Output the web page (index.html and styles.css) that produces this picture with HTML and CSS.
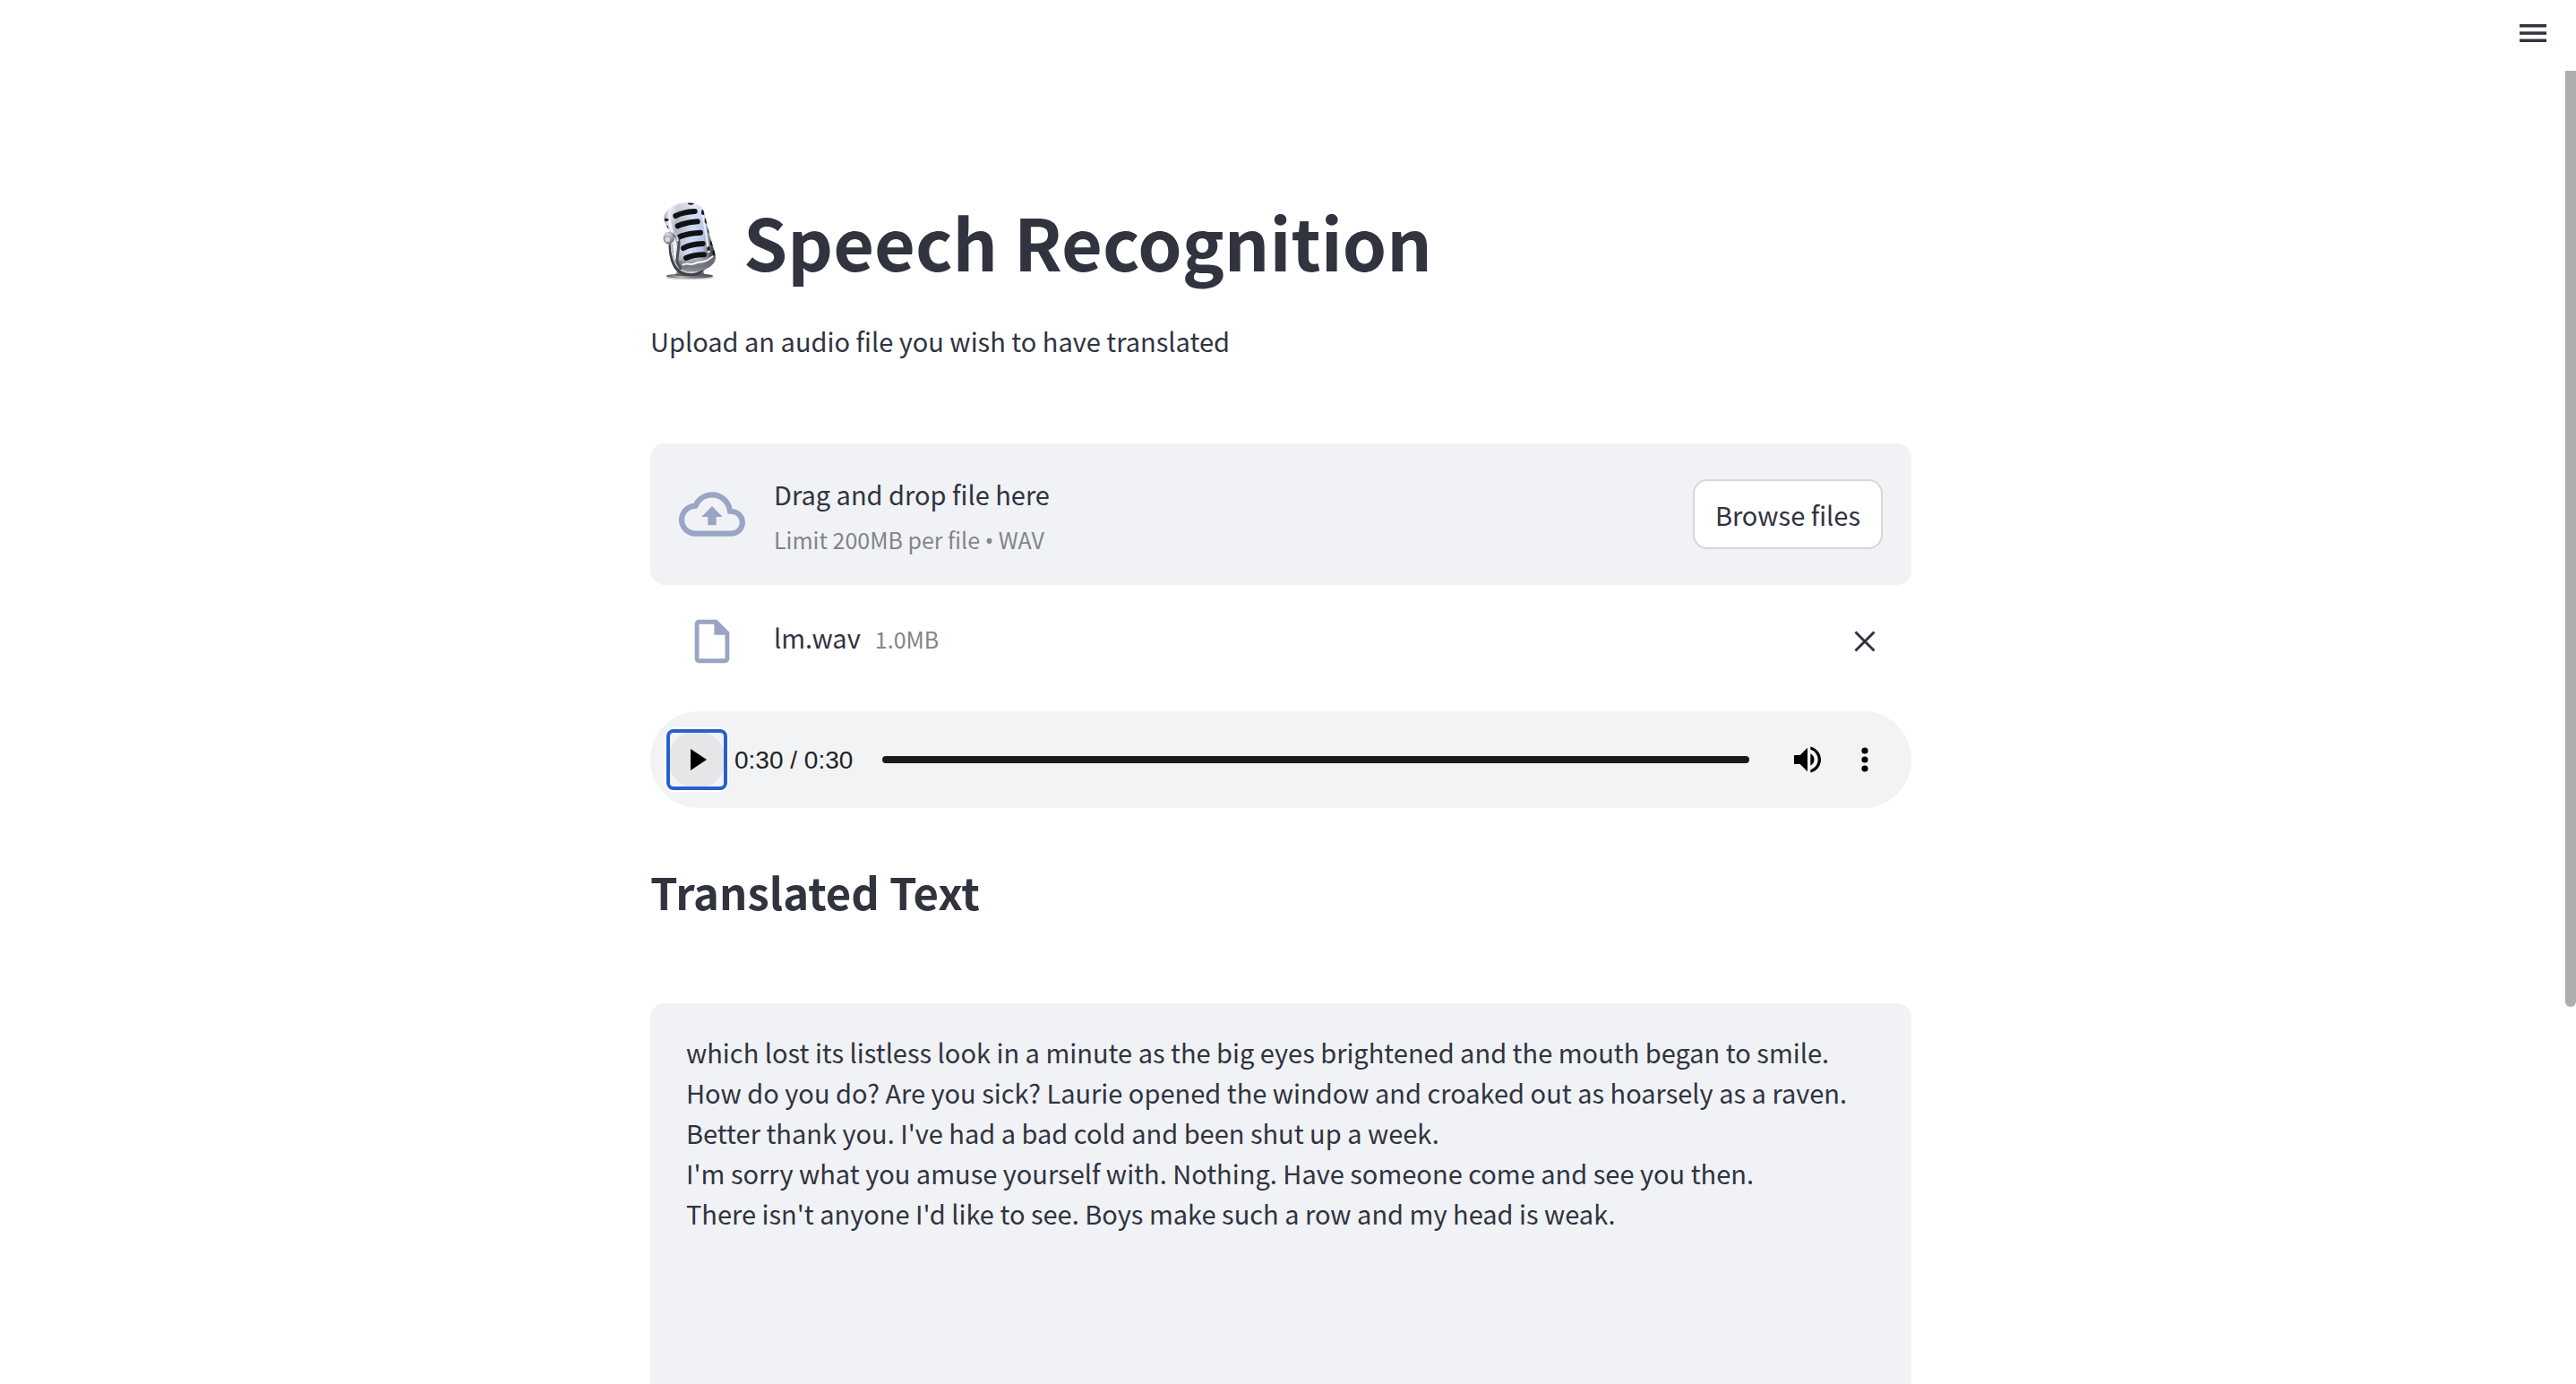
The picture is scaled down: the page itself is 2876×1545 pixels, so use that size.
FILE: index.html
```html
<!DOCTYPE html>
<html lang="en">
<head>
<meta charset="utf-8">
<title>Speech Recognition</title>
<link rel="stylesheet" href="styles.css">
</head>
<body>
<div class="app">
  <header class="toolbar">
    <button class="icon-button menu-button" type="button" aria-label="Main menu">
      <svg width="30" height="20" viewBox="0 0 30 20" fill="currentColor"><path d="M0 0h30v3.4H0zM0 8.3h30v3.4H0zM0 16.6h30V20H0z"/></svg>
    </button>
  </header>

  <div class="viewport">
    <main class="content">
      <h1 class="title">
        <svg class="mic" viewBox="30 36 264 288" aria-hidden="true">
          <defs>
            <linearGradient id="body" x1="0" y1="0" x2="1" y2="0.15">
              <stop offset="0" stop-color="#6d6f74"/><stop offset="0.12" stop-color="#e6eaf0"/>
              <stop offset="0.28" stop-color="#aeb4bf"/><stop offset="0.6" stop-color="#cfdcf6"/>
              <stop offset="0.82" stop-color="#b4c4e6"/><stop offset="0.93" stop-color="#85888f"/>
              <stop offset="1" stop-color="#4c4d51"/>
            </linearGradient>
            <linearGradient id="shade" x1="0" y1="0" x2="0" y2="1">
              <stop offset="0" stop-color="#fff" stop-opacity="0.5"/><stop offset="0.3" stop-color="#fff" stop-opacity="0"/>
              <stop offset="0.72" stop-color="#777" stop-opacity="0"/><stop offset="0.9" stop-color="#66686c" stop-opacity="0.75"/>
              <stop offset="1" stop-color="#d5d6d8" stop-opacity="0.6"/>
            </linearGradient>
            <linearGradient id="base" x1="0" y1="0" x2="1" y2="0">
              <stop offset="0" stop-color="#55575b"/><stop offset="0.3" stop-color="#b5b7bb"/>
              <stop offset="0.6" stop-color="#77797d"/><stop offset="1" stop-color="#4b4c50"/>
            </linearGradient>
            <radialGradient id="knob" cx="0.4" cy="0.35" r="0.7">
              <stop offset="0" stop-color="#f4f6f9"/><stop offset="0.55" stop-color="#a9adb4"/><stop offset="1" stop-color="#5d5f64"/>
            </radialGradient>
            <clipPath id="shell"><path d="M76 104C78 80 100 60 132 54C166 47 201 57 207 75C218 110 225 150 236 185C242 205 250 224 248 240C244 264 212 281 180 282C146 282 124 268 119 242L106 172C102 148 76 128 76 104Z"/></clipPath>
          </defs>
          <ellipse cx="162" cy="303" rx="81" ry="6" fill="#c4c5c8"/>
          <path d="M124 270L116 293H212L203 270Z" fill="#77797e"/>
          <ellipse cx="162" cy="297" rx="79" ry="8" fill="url(#base)"/>
          <ellipse cx="164" cy="293" rx="53" ry="5" fill="#55575b"/>
          <path d="M99 190C97 225 107 267 132 283C163 298 202 292 211 263" fill="none" stroke="#3f4146" stroke-width="14"/>
          <path d="M101 190C101 225 111 262 135 278C163 293 199 286 208 260" fill="none" stroke="#c5c8ce" stroke-width="6"/>
          <path d="M76 104C78 80 100 60 132 54C166 47 201 57 207 75C218 110 225 150 236 185C242 205 250 224 248 240C244 264 212 281 180 282C146 282 124 268 119 242L106 172C102 148 76 128 76 104Z" fill="url(#body)"/>
          <g clip-path="url(#shell)">
            <path d="M70 48H255V290H70Z" fill="url(#shade)"/>
            <path d="M119 240C140 258 164 246 180 257C202 260 220 240 248 221V286H124Z" fill="#73757b" opacity="0.7"/>
            <path d="M137 260C162 250 165 267 190 251C216 252 228 240 240 231" fill="none" stroke="#f3f5fa" stroke-width="6"/>
            <path d="M92 104L122 228" stroke="#eff3fb" stroke-width="8"/>
            <path d="M204 83L227 219" stroke="#e7efff" stroke-width="7"/>
            <g fill="none" stroke="#111214" stroke-width="18" stroke-linecap="round">
              <path d="M115 96C132 87 153 82 179 81"/>
              <path d="M122 130C142 121 165 116 188 115"/>
              <path d="M129 166C148 157 173 153 198 152"/>
              <path d="M141 204C159 194 183 190 206 189"/>
              <path d="M150 237C168 229 190 226 210 226"/>
            </g>
            <g fill="#17181b">
              <ellipse cx="166" cy="55" rx="10" ry="4"/>
              <ellipse cx="207" cy="84" rx="6" ry="9"/><ellipse cx="218" cy="112" rx="6" ry="10"/>
              <ellipse cx="228" cy="144" rx="6" ry="9"/><ellipse cx="237" cy="187" rx="6" ry="9"/>
              <ellipse cx="225" cy="206" rx="5" ry="7"/><ellipse cx="244" cy="220" rx="6" ry="9"/>
              <ellipse cx="84" cy="109" rx="8" ry="5"/><ellipse cx="85" cy="137" rx="6" ry="9"/>
            </g>
          </g>
          <path d="M94 153C113 156 126 169 126 188L119 249L133 275" fill="none" stroke="#4d4f54" stroke-width="9"/>
          <path d="M94 150C111 151 122 163 123 181" fill="none" stroke="#d9dde4" stroke-width="5"/>
          <ellipse cx="92" cy="170" rx="19" ry="21" fill="url(#knob)"/>
          <circle cx="88" cy="174" r="11" fill="#d5d9e0" stroke="#7f838b" stroke-width="3"/>
        </svg>
        <span>Speech Recognition</span>
      </h1>
      <p class="intro">Upload an audio file you wish to have translated</p>

      <section class="dropzone" aria-label="File upload">
        <svg class="cloud" viewBox="0 0 24 24" fill="currentColor" aria-hidden="true"><path d="M19.35 10.04A7.49 7.49 0 0 0 12 4C9.11 4 6.6 5.64 5.35 8.04A5.994 5.994 0 0 0 0 14c0 3.31 2.69 6 6 6h13c2.76 0 5-2.24 5-5 0-2.64-2.05-4.78-4.65-4.96zM19 18H6c-2.21 0-4-1.79-4-4 0-2.05 1.53-3.76 3.56-3.97l1.07-.11.5-.95A5.469 5.469 0 0 1 12 6c2.62 0 4.88 1.86 5.39 4.43l.3 1.5 1.53.11A2.98 2.98 0 0 1 22 15c0 1.65-1.35 3-3 3zM8.2 13h2.3v3h3v-3h2.3L12 9.1z"/></svg>
        <div class="dropzone-text">
          <span class="label">Drag and drop file here</span>
          <small class="hint">Limit 200MB per file <span class="bullet">•</span> WAV</small>
        </div>
        <button class="browse" type="button">Browse files</button>
      </section>

      <div class="file-row">
        <svg class="file-icon" viewBox="0 0 24 24" fill="currentColor" aria-hidden="true"><path fill-rule="evenodd" d="M6 2h8.2L20 7.8V20a2 2 0 0 1-2 2H6a2 2 0 0 1-2-2V4c0-1.100.9-2 2-2zM6 4v16h12V9h-5V4z"/></svg>
        <div class="file-name"><span class="label">lm.wav</span><small class="hint">1.0MB</small></div>
        <button class="icon-button remove" type="button" aria-label="Remove file">
          <svg width="24" height="24" viewBox="0 0 24 24" fill="none" stroke="currentColor" stroke-width="3"><path d="M1.500 1.500l21 21M22.500 1.500l-21 21"/></svg>
        </button>
      </div>

      <div class="player">
        <button class="icon-button play" type="button" aria-label="Play">
          <svg width="64" height="64" viewBox="0 0 64 64"><circle cx="32" cy="32" r="32" fill="#e5e6e8"/><path d="M25 20v24l18-12z"/></svg>
        </button>
        <span class="time">0:30 / 0:30</span>
        <input class="seek" type="range" min="0" max="30" value="30" aria-label="Seek">
        <button class="icon-button volume" type="button" aria-label="Mute">
          <svg width="40" height="40" viewBox="0 0 24 24" fill="currentColor"><path d="M3 9v6h4l5 5V4L7 9H3zm13.500 3A4.500 4.500 0 0 0 14 7.970v8.050c1.480-.73 2.500-2.250 2.500-4.020zM14 3.230v2.060c2.890.86 5 3.540 5 6.710s-2.110 5.850-5 6.710v2.060c4.010-.91 7-4.490 7-8.770s-2.990-7.860-7-8.770z"/></svg>
        </button>
        <button class="icon-button more" type="button" aria-label="More options">
          <svg width="40" height="40" viewBox="0 0 40 40" fill="currentColor"><circle cx="20" cy="10" r="3.600"/><circle cx="20" cy="20" r="3.600"/><circle cx="20" cy="30" r="3.600"/></svg>
        </button>
      </div>

      <h2 class="subtitle" id="translated">Translated Text</h2>
      <textarea class="result" aria-labelledby="translated" spellcheck="false">which lost its listless look in a minute as the big eyes brightened and the mouth began to smile.
How do you do? Are you sick? Laurie opened the window and croaked out as hoarsely as a raven.
Better thank you. I've had a bad cold and been shut up a week.
I'm sorry what you amuse yourself with. Nothing. Have someone come and see you then.
There isn't anyone I'd like to see. Boys make such a row and my head is weak.</textarea>
    </main>
    <div class="scroll-thumb"></div>
  </div>
</div>
</body>
</html>
```
FILE: styles.css
```css
* {
  box-sizing: border-box;
}

body {
  margin: 0;
  background: #fff;
  color: #31333f;
  font-family: "Noto Sans CJK SC", "Noto Sans", sans-serif;
  font-size: 29px;
  line-height: 45px;
  font-kerning: normal;
}

button,
textarea {
  font: inherit;
  font-kerning: inherit;
  color: inherit;
}

svg {
  display: block;
  flex: none;
}

.app {
  height: 100vh;
  overflow: hidden;
  display: flex;
  flex-direction: column;
}

.toolbar {
  flex: none;
  display: flex;
  justify-content: flex-end;
  padding: 27px 33px 32px;
}

.icon-button {
  display: flex;
  align-items: center;
  justify-content: center;
  flex: none;
  padding: 0;
  border: 0;
  background: none;
}

.viewport {
  position: relative;
  flex: 1;
  min-height: 0;
  overflow: hidden;
  padding: 113px 16px 0 0;
}

.scroll-thumb {
  position: absolute;
  top: 0;
  right: 0;
  width: 12px;
  height: 1045px;
  border-radius: 0 0 6px 6px;
  background: #adadb2;
}

.content {
  max-width: 1408px;
  margin: 0 auto;
}

.title {
  display: flex;
  align-items: center;
  gap: 16px;
  margin: 0 0 12px;
  font-size: 79px;
  line-height: 154px;
  font-weight: 700;
}

.mic {
  width: 88px;
  height: 96px;
}

.intro {
  margin: 0 0 92px;
}

.dropzone {
  display: flex;
  align-items: center;
  gap: 32px;
  min-height: 158px;
  padding: 0 32px;
  border-radius: 16px;
  background: #f0f2f6;
}

.cloud {
  width: 74px;
  height: 74px;
  color: #9aa5c3;
}

.dropzone-text {
  flex: 1;
  display: flex;
  flex-direction: column;
  gap: 6px;
  padding-top: 6px;
}

.hint {
  color: #83848c;
  font-size: 25px;
}

.bullet {
  font-family: "Noto Sans", sans-serif;
  line-height: 1;
}

.browse {
  height: 78px;
  padding: 0 23px;
  border: 2px solid #d6d6d9;
  border-radius: 16px;
  background: #fff;
}

.file-row {
  display: flex;
  align-items: center;
  height: 58px;
  margin: 34px 32px 49px;
  padding: 0 8px;
}

.file-icon {
  width: 58px;
  height: 58px;
  margin-right: 40px;
  color: #9aa5c3;
}

.file-name {
  flex: 1;
  display: flex;
  align-items: baseline;
  gap: 16px;
  padding-bottom: 8px;
}

.player {
  display: flex;
  align-items: center;
  height: 108px;
  padding: 0 32px 0 18px;
  border-radius: 54px;
  background: #f1f3f4;
}

.play {
  width: 68px;
  height: 68px;
  border: 4px solid #285fcb;
  border-radius: 8px;
  box-shadow: 0 0 0 2px #fff;
  overflow: hidden;
}

.time {
  margin: 0 33px 0 8px;
  font-family: "Liberation Sans", Arial, sans-serif;
  font-size: 28px;
  color: #222;
}

.seek {
  flex: 1;
  min-width: 0;
  height: 8px;
  margin: 0 45px 0 0;
  border-radius: 4px;
  background: #1a1a1a;
  appearance: none;
}

.seek::-webkit-slider-thumb {
  appearance: none;
  width: 0;
  height: 0;
}

.volume,
.more {
  width: 40px;
  height: 40px;
  color: #000;
}

.volume {
  margin-right: 24px;
}

.subtitle {
  margin: 55px 0 87px;
  font-size: 49px;
  line-height: 76px;
  font-weight: 600;
}

.result {
  display: block;
  width: 100%;
  height: 640px;
  padding: 32px 40px;
  border: 0;
  border-radius: 16px;
  background: #f0f2f6;
  resize: none;
  outline: 0;
}
```
